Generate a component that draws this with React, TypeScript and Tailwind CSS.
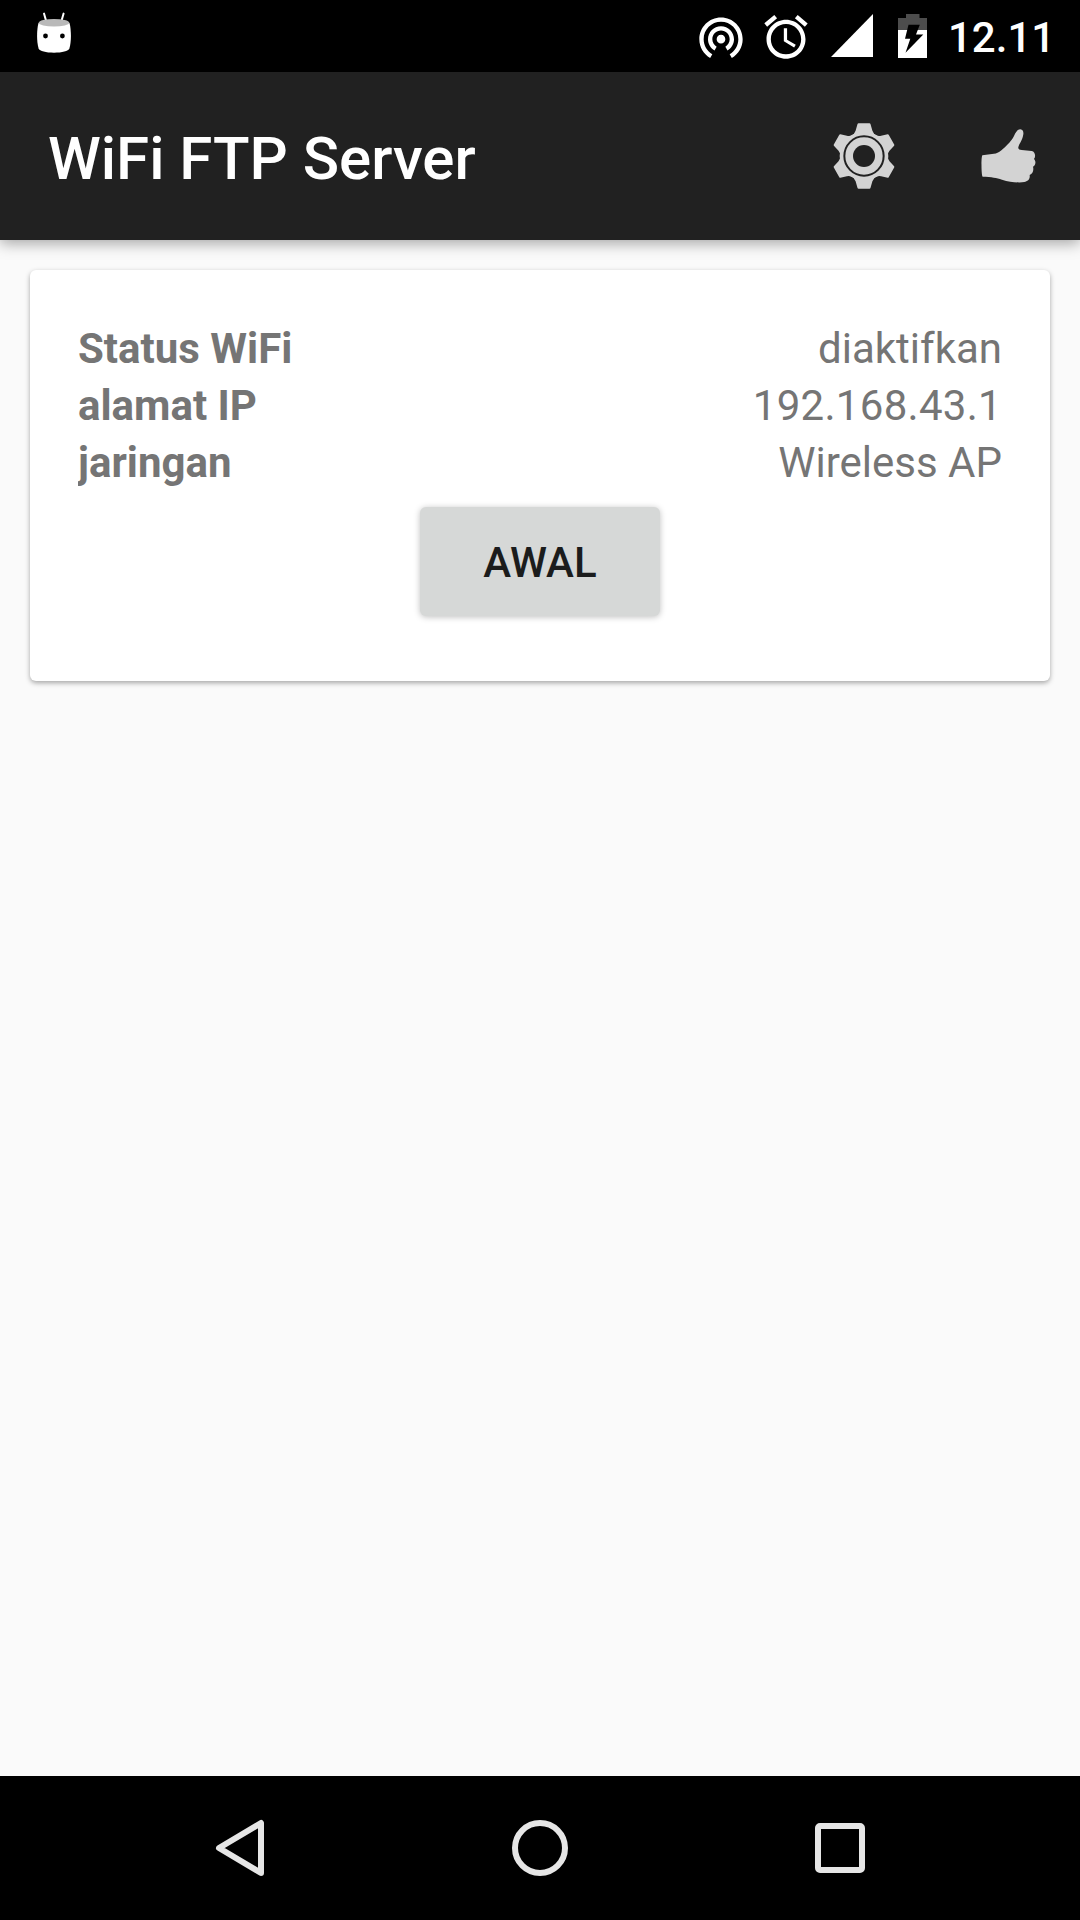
import React from 'react';

interface StatusRow {
    label: string;
    value: string;
    valueClass?: string;
}

const STATUS_ROWS: StatusRow[] = [
    { label: 'Status WiFi', value: 'diaktifkan' },
    { label: 'alamat IP', value: '192.168.43.1', valueClass: 'tracking-[0.3px]' },
    { label: 'jaringan', value: 'Wireless AP' },
];

const TEETH = [0, 60, 120, 180, 240, 300];

const RobotIcon = () => (
    <svg className="w-[40px] h-[48px]" viewBox="0 0 40 48">
        <path d="M10 5.6l2 7M29.6 5.6l-2 7" stroke="#fff" strokeWidth="2" strokeLinecap="round" />
        <path d="M4.5 15C2.6 22 2.6 34 4.6 40.5C5.6 43 12 44.7 20 44.7S34.4 43 35.4 40.5C37.4 34 37.4 22 35.5 15C34 12 6 12 4.5 15Z" fill="#fff" />
        <ellipse cx="20" cy="14.8" rx="15.2" ry="3.8" fill="#b9b9b9" />
        <circle cx="11.5" cy="28" r="2.4" fill="#000" />
        <circle cx="28.4" cy="28" r="2.4" fill="#000" />
    </svg>
);

const HotspotIcon = () => (
    <svg className="w-[52px] h-[52px]" viewBox="0 0 24 24" fill="#fff">
        <path d="M12 11c-1.1 0-2 .9-2 2s.9 2 2 2 2-.9 2-2-.9-2-2-2zm6 2c0-3.31-2.69-6-6-6s-6 2.69-6 6c0 2.22 1.21 4.15 3 5.19l1-1.74c-1.19-.7-2-1.97-2-3.45 0-2.21 1.79-4 4-4s4 1.79 4 4c0 1.48-.81 2.75-2 3.45l1 1.74c1.79-1.04 3-2.97 3-5.19zM12 3C6.48 3 2 7.48 2 13c0 3.7 2.01 6.92 4.99 8.65l1-1.73C5.61 18.53 4 15.96 4 13c0-4.42 3.58-8 8-8s8 3.58 8 8c0 2.96-1.61 5.53-4 6.92l1 1.73c2.99-1.73 5-4.95 5-8.65 0-5.52-4.48-10-10-10z" />
    </svg>
);

const AlarmIcon = () => (
    <svg className="w-[52px] h-[52px]" viewBox="0 0 24 24" fill="#fff">
        <path d="M22 5.72l-4.6-3.86-1.29 1.53 4.6 3.86L22 5.72zM7.88 3.39L6.6 1.86 2 5.71l1.29 1.53 4.59-3.85zM12.5 8H11v6l4.75 2.85.75-1.23-4-2.37V8zM12 4c-4.97 0-9 4.03-9 9s4.02 9 9 9c4.97 0 9-4.03 9-9s-4.03-9-9-9zm0 16c-3.87 0-7-3.13-7-7s3.13-7 7-7 7 3.13 7 7-3.13 7-7 7z" />
    </svg>
);

const SignalIcon = () => (
    <svg className="w-[42px] h-[43px]" viewBox="0 0 42 43">
        <path d="M42 0v43H0z" fill="#fff" />
    </svg>
);

const BatteryIcon = () => (
    <svg className="w-[29px] h-[44px]" viewBox="0 0 29 44">
        <path d="M8 0h13.5v4H29v12H0V4h8z" fill="#4d4d4d" />
        <path d="M0 16h29v28H0z" fill="#fff" />
        <path d="M10.5 10.7h11.3L18 20.5h7.3L7.5 38.8l4.8-14H7z" fill="#000" />
    </svg>
);

const GearIcon = () => (
    <svg className="w-[64px] h-[68px]" viewBox="-96 -102 192 204">
        <g fill="#d3d3d3">
            <circle r="73" />
            {TEETH.map(angle => (
                <path
                    key={angle}
                    d="M-40-60Q-29-66-26-76L-20-96Q-19-98-17-98H17Q19-98 20-96L26-76Q29-66 40-60Z"
                    transform={`scale(0.97 1) rotate(${angle})`}
                />
            ))}
        </g>
        <circle r="59" fill="none" stroke="#212121" strokeWidth="6" />
        <circle r="33" fill="#212121" />
    </svg>
);

const ThumbIcon = () => (
    <svg className="w-[57px] h-[56px]" viewBox="509 84 171 168">
        <path
            d="M516 166L545 162C562 161 572 152 582 143C597 130 608 116 612 106C617 96 622 88 630 88C638 89 640 95 639 103C637 120 626 132 624 142C623 148 628 150 634 150L664 153C675 155 677 170 671 177C678 184 676 196 668 200C671 210 667 221 658 225C660 238 652 244 642 246C628 249 600 247 575 239C558 233 545 231 517 230C513 228 512 172 516 166Z"
            fill="#d3d3d3"
        />
    </svg>
);

const StatusBar = () => (
    <div className="h-[72px] bg-black flex items-start pl-[34px] pr-[28px]">
        <div className="flex-1 pt-2">
            <RobotIcon />
        </div>
        <div className="flex items-start">
            <div className="pt-[11px]"><HotspotIcon /></div>
            <div className="pt-[11px] ml-[13px]"><AlarmIcon /></div>
            <div className="pt-[14px] ml-[19px]"><SignalIcon /></div>
            <div className="pt-[14px] ml-[25px]"><BatteryIcon /></div>
            <span className="ml-[21px] mt-[13px] w-[104px] text-[42px] leading-[49px] font-medium text-white whitespace-nowrap">12.11</span>
        </div>
    </div>
);

const Toolbar = () => (
    <header className="relative z-10 h-[168px] bg-[#212121] flex items-center pl-[48px] pr-[43px] shadow-[0_3px_14px_rgba(0,0,0,0.36)]">
        <h1 className="flex-1 pt-[5px] text-[60px] leading-[70px] font-medium text-white whitespace-nowrap">WiFi FTP Server</h1>
        <button><GearIcon /></button>
        <button className="ml-[84px]"><ThumbIcon /></button>
    </header>
);

const StatusCard = () => (
    <section className="m-[30px] h-[411px] bg-white rounded-[6px] px-[48px] pt-[50px] shadow-[0_2px_5px_rgba(0,0,0,0.34)]">
        {STATUS_ROWS.map(row => (
            <div key={row.label} className="flex justify-between text-[42px] leading-[57px] text-[#757575]">
                <span className="font-bold overflow-hidden">{row.label}</span>
                <span className={row.valueClass}>{row.value}</span>
            </div>
        ))}
        <div className="flex justify-center mt-[16px]">
            <button className="w-[240px] h-[109px] pt-[2px] rounded-[6px] bg-[#d6d8d7] text-[42px] font-medium text-[#1b1c1c] shadow-[0_1px_6px_rgba(0,0,0,0.25)]">
                AWAL
            </button>
        </div>
    </section>
);

const NavBar = () => (
    <nav className="h-[144px] bg-black flex items-center px-[90px]">
        <button className="flex-1 flex justify-center">
            <svg className="w-[60px] h-[60px]" viewBox="0 0 60 60" fill="none" stroke="#e6e6e6" strokeWidth="6" strokeLinejoin="round">
                <path d="M51 5v50L9 30z" />
            </svg>
        </button>
        <button className="flex-1 flex justify-center">
            <svg className="w-[60px] h-[60px]" viewBox="0 0 60 60" fill="none" stroke="#e6e6e6" strokeWidth="6">
                <circle cx="30" cy="30" r="25" />
            </svg>
        </button>
        <button className="flex-1 flex justify-center">
            <svg className="w-[60px] h-[60px]" viewBox="0 0 60 60" fill="none" stroke="#e6e6e6" strokeWidth="6">
                <rect x="8" y="8" width="44" height="44" rx="2" />
            </svg>
        </button>
    </nav>
);

export default function App() {
    return (
        <div className="w-[1080px] h-[1920px] flex flex-col bg-[#fafafa] font-['Roboto',sans-serif] overflow-hidden">
            <StatusBar />
            <Toolbar />
            <main className="flex-1">
                <StatusCard />
            </main>
            <NavBar />
        </div>
    );
}
